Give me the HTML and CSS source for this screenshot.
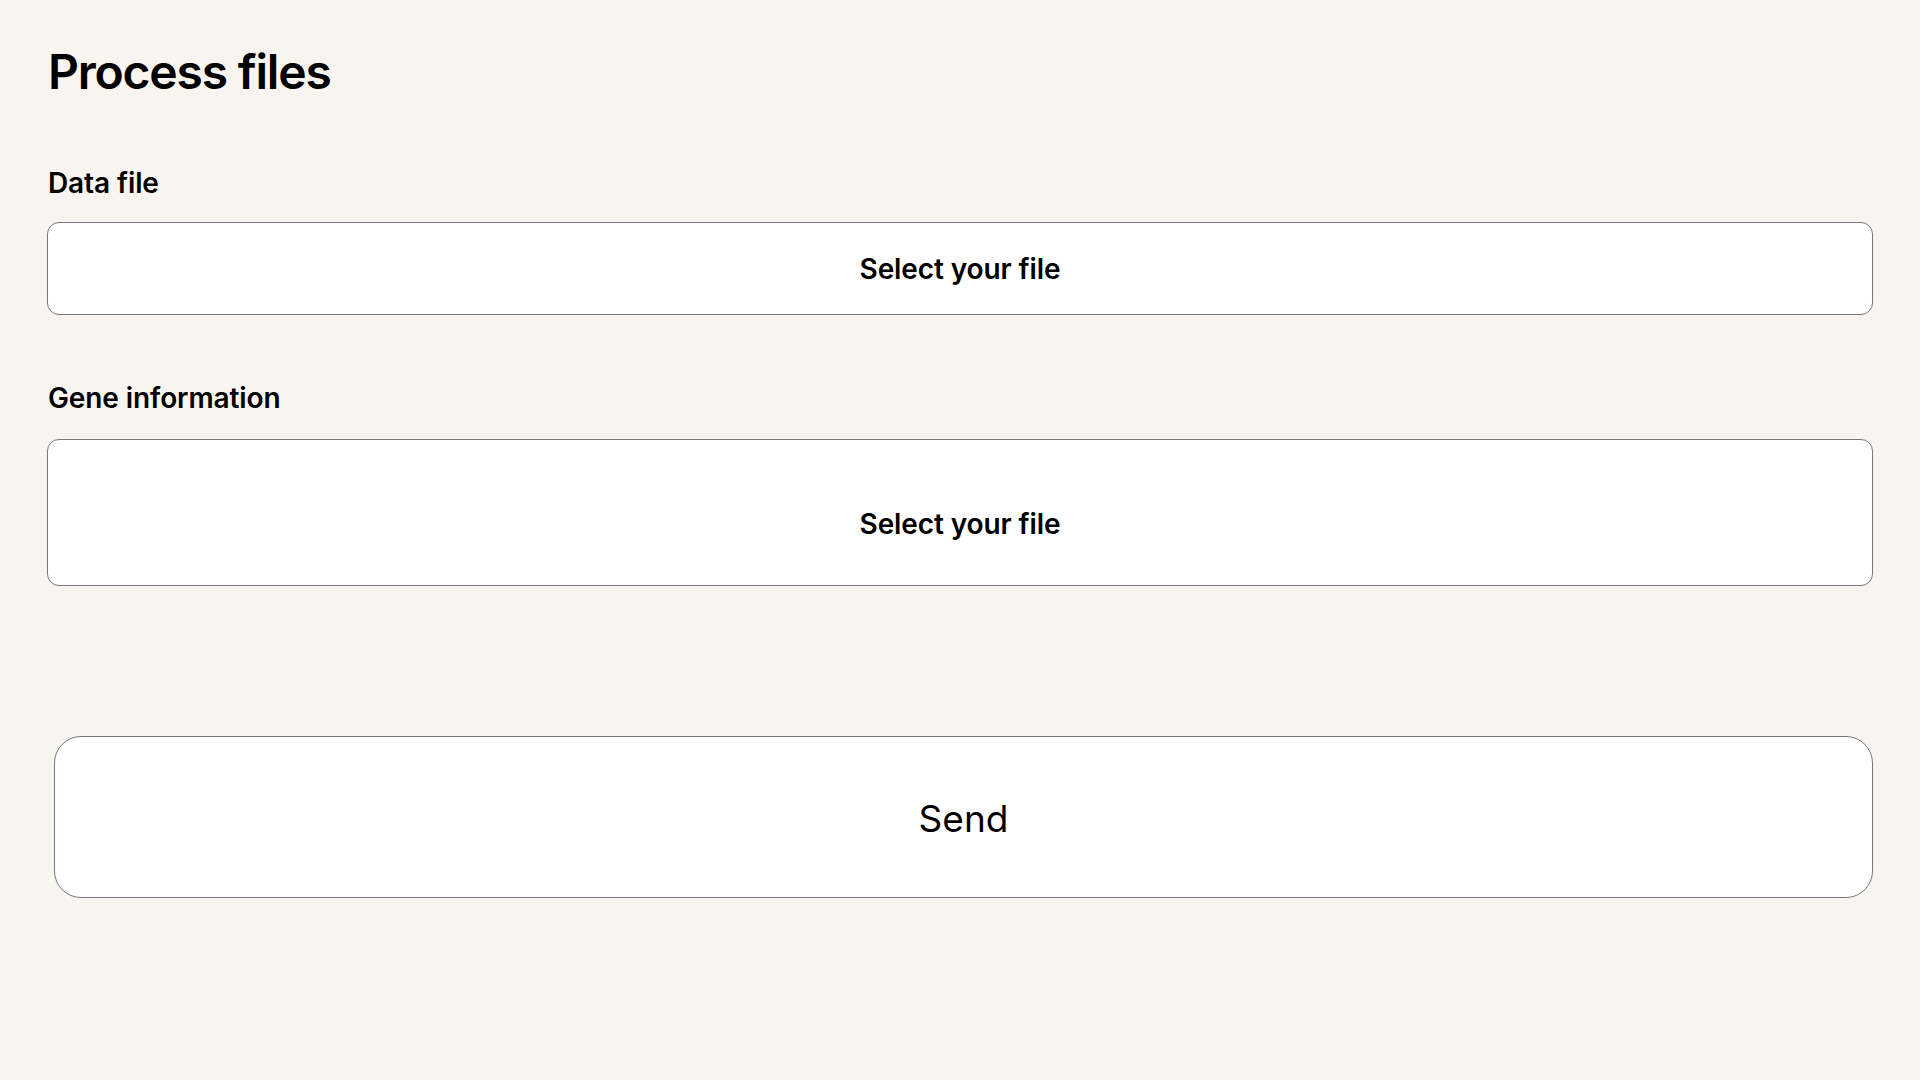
FILE: index.html
```html
<!DOCTYPE html>
<html lang="en">
<head>
<meta charset="utf-8">
<title>Process files</title>
<link rel="stylesheet" href="styles.css">
</head>
<body>
<main class="page">
  <h1 class="title">Process files</h1>
  <section class="field">
    <label class="label">Data file</label>
    <div class="drop drop-small">Select your file</div>
  </section>
  <section class="field field-gene">
    <label class="label">Gene information</label>
    <div class="drop drop-large">Select your file</div>
  </section>
  <div class="actions">
    <button class="send">Send</button>
  </div>
</main>
</body>
</html>
```
FILE: styles.css
```css
html, body {
  margin: 0;
  padding: 0;
  background: #f8f5f0;
  font-family: Inter, "Noto Sans", "Liberation Sans", sans-serif;
  color: #000;
}
.page {
  padding: 43px 47px 0 47px;
  display: flex;
  flex-direction: column;
}
.title {
  margin: 0;
  font-size: 48px;
  font-weight: 600;
  line-height: 58px;
  letter-spacing: -1.2px;
  padding-left: 1px;
}
.field {
  display: flex;
  flex-direction: column;
}
.label {
  font-size: 28px;
  font-weight: 600;
  line-height: 34px;
  padding-left: 1px;
  letter-spacing: -0.1px;
}
.field:first-of-type {
  margin-top: 65px;
}
.field .label {
  margin-bottom: 22px;
}
.field-gene {
  margin-top: 66px;
}
.field-gene .label {
  margin-bottom: 24px;
}
.drop {
  background: #fff;
  border: 1px solid #777;
  border-radius: 12px;
  display: flex;
  align-items: center;
  justify-content: center;
  font-size: 28px;
  font-weight: 600;
  letter-spacing: -0.1px;
  box-sizing: border-box;
}
.drop-small {
  height: 93px;
}
.drop-large {
  height: 147px;
  padding-top: 22px;
}
.actions {
  margin-top: 150px;
  padding-left: 7px;
  display: flex;
}
.send {
  flex: 1;
  height: 162px;
  background: #fff;
  border: 1px solid #777;
  border-radius: 27px;
  font-family: Inter, "Noto Sans", "Liberation Sans", sans-serif;
  font-size: 37px;
  font-weight: 400;
  color: #000;
  padding: 0;
  padding-top: 2px;
}
```
